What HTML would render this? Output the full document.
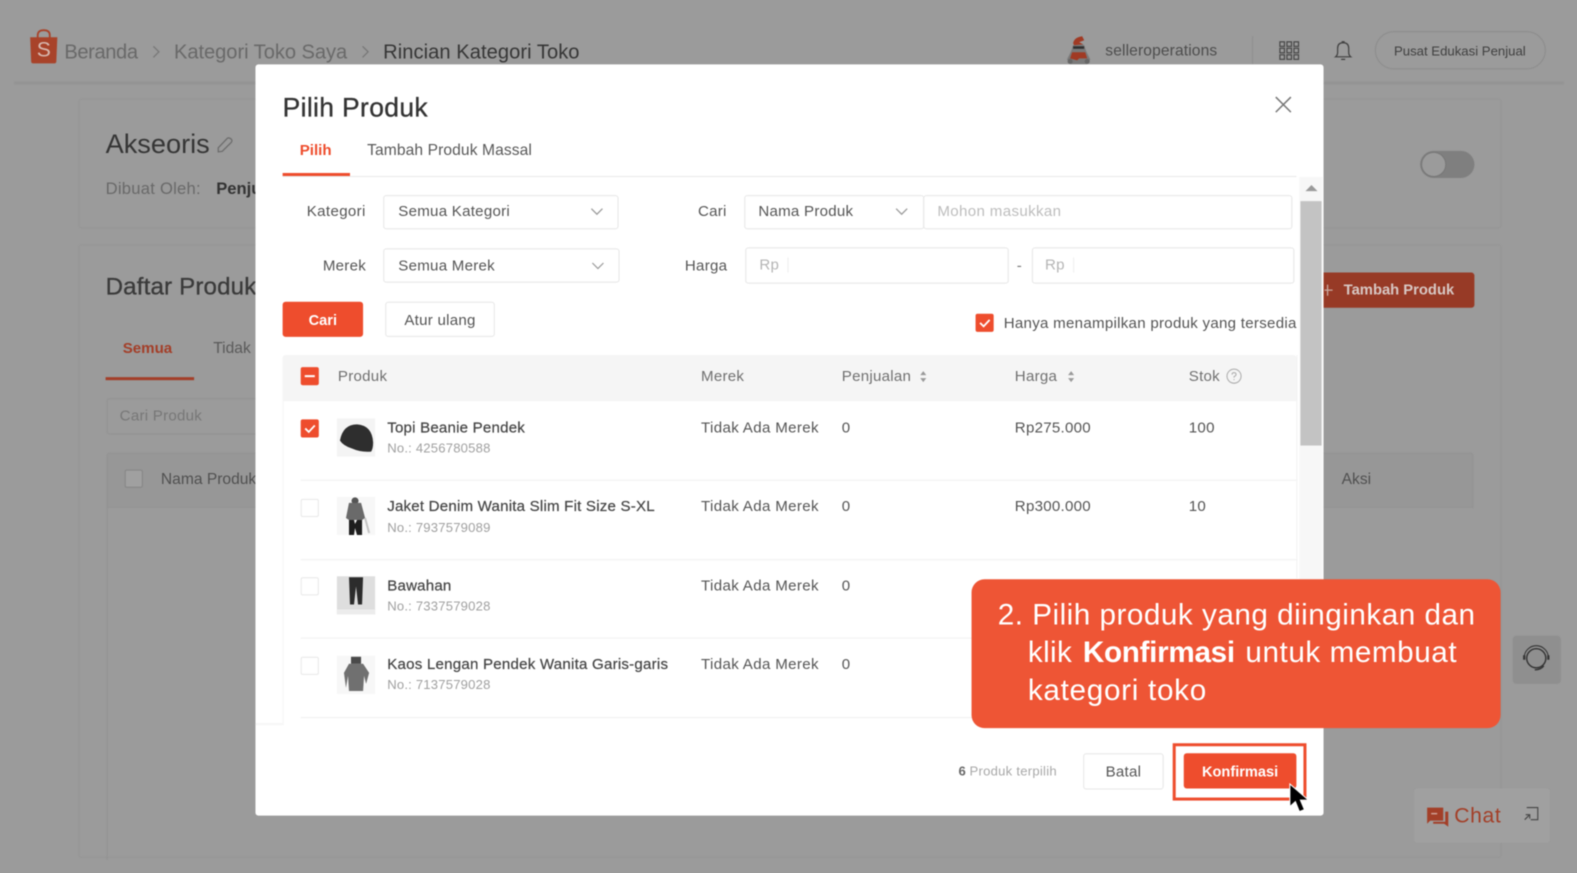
<!DOCTYPE html>
<html><head><meta charset="utf-8"><style>
html,body{margin:0;padding:0;width:1577px;height:873px;overflow:hidden;background:#9b9b9b}
#w{position:absolute;left:0;top:0;width:1568px;height:868px;transform:scale(1.00574);transform-origin:0 0;font-family:"Liberation Sans",sans-serif;overflow:hidden;filter:blur(.45px)}
.a{position:absolute;box-sizing:border-box}
.t{position:absolute;white-space:nowrap;line-height:20px;height:20px;font-size:15px;color:#555;letter-spacing:.25px;margin-top:1px}
.bx{position:absolute;box-sizing:border-box;border:1px solid #e6e6e6;border-radius:3px;background:#fff}
.cb{position:absolute;box-sizing:border-box;width:18px;height:18px;border-radius:2px;border:1px solid #e8e8e8;background:#fff}
.on{background:#ee4d2d;border-color:#ee4d2d}
.line{position:absolute;left:299px;width:990px;height:1px;background:#f0f0f0}
svg{position:absolute;overflow:visible}
.nm{font-size:15px;color:#444;-webkit-text-stroke:.2px #444;letter-spacing:.2px}
.no{font-size:13px;color:#a0a0a0;letter-spacing:.2px}
.c{font-size:29.500px;line-height:34px;height:34px;color:#fff}
</style></head><body><div id="w">

<!-- background page -->
<div class="a" style="left:14px;top:81px;width:1541px;height:3px;background:#949494"></div>
<div class="a" style="left:78px;top:98px;width:1415px;height:129px;border:1px solid #959595;border-radius:3px"></div>
<div class="a" style="left:78px;top:243px;width:1415px;height:610px;border:1px solid #959595;border-radius:3px"></div>

<svg style="left:29px;top:29px" width="29" height="35" viewBox="0 0 29 35"><path d="M1 8H28L27 32Q27 34 25 34H4Q2 34 2 32Z" fill="#a8432a"/><path d="M8.500 9V6Q8.500 1 14.500 1T20.500 6V9" fill="none" stroke="#a8432a" stroke-width="1.800"/></svg>
<div class="t" style="left:36px;top:37px;width:15px;text-align:center;font-size:21px;line-height:24px;height:24px;color:#d8b9b0;letter-spacing:0">S</div>
<div class="t" style="left:64px;top:41px;font-size:20px;color:#696969;letter-spacing:-.4px">Beranda</div>
<svg style="left:151px;top:45px" width="9" height="13"><path d="M1.500 1L7 6.500L1.500 12" fill="none" stroke="#767676" stroke-width="1.200"/></svg>
<div class="t" style="left:173px;top:41px;font-size:20px;color:#696969;letter-spacing:-.05px">Kategori Toko Saya</div>
<svg style="left:359px;top:45px" width="9" height="13"><path d="M1.500 1L7 6.500L1.500 12" fill="none" stroke="#767676" stroke-width="1.200"/></svg>
<div class="t" style="left:381px;top:41px;font-size:20px;color:#363636;letter-spacing:.05px">Rincian Kategori Toko</div>

<svg style="left:1058px;top:35px" width="29" height="30" viewBox="0 0 29 30"><path d="M9 10Q14 6 20 10L22 16L26 24L23 29H6L3 24L7 16Z" fill="#7a7a7a"/><path d="M9 8Q10 2 18 1L20 5L15 7L19 9L10 10Z" fill="#a03a24"/><rect x="9" y="11" width="11" height="2.500" fill="#2f2f2f"/><path d="M8 17H21L23 23H15L13 25L6 23Z" fill="#a03a24"/><circle cx="6" cy="26" r="2.500" fill="#666"/><circle cx="23" cy="26" r="2.500" fill="#666"/></svg>
<div class="t" style="left:1099px;top:40px;font-size:15.500px;color:#4d4d4d;letter-spacing:.12px">selleroperations</div>
<div class="a" style="left:1245px;top:36px;width:1px;height:29px;background:#8f8f8f"></div>
<svg style="left:1272px;top:41px" width="20" height="19" fill="none" stroke="#474747" stroke-width="1.200"><rect x=".6" y=".6" width="4.500" height="4.500"/><rect x="7.600" y=".6" width="4.500" height="4.500"/><rect x="14.600" y=".6" width="4.500" height="4.500"/><rect x=".6" y="7" width="4.500" height="4.500"/><rect x="7.600" y="7" width="4.500" height="4.500"/><rect x="14.600" y="7" width="4.500" height="4.500"/><rect x=".6" y="13.500" width="4.500" height="4.500"/><rect x="7.600" y="13.500" width="4.500" height="4.500"/><rect x="14.600" y="13.500" width="4.500" height="4.500"/></svg>
<svg style="left:1326px;top:40px" width="19" height="21" fill="none" stroke="#3f3f3f" stroke-width="1.200"><path d="M2 16.500Q4 15 4 12V8Q4 2.500 9.500 2.500T15 8V12Q15 15 17 16.500Z"/><path d="M8 1.500H11M7.500 19H11.500"/></svg>
<div class="a" style="left:1367px;top:31px;width:170px;height:38px;border:1px solid #8c8c8c;border-radius:19px"></div>
<div class="t" style="left:1386px;top:40px;font-size:13.100px;color:#404040;letter-spacing:0">Pusat Edukasi Penjual</div>

<div class="t" style="left:105px;top:130px;font-size:27px;line-height:24px;height:24px;color:#353535;letter-spacing:0">Akseoris</div>
<svg style="left:215px;top:135px" width="18" height="18" fill="none" stroke="#6a6a6a" stroke-width="1.200"><path d="M2 12L11 2.500Q12.500 1.500 14.500 3T15 6.500L6 15.500L2 16Z"/></svg>
<div class="t" style="left:105px;top:177px;font-size:16.500px;color:#696969">Dibuat Oleh:</div>
<div class="t" style="left:215px;top:177px;font-size:16.500px;font-weight:bold;color:#333;letter-spacing:0">Penjual</div>
<div class="a" style="left:1412px;top:150px;width:54px;height:27px;border-radius:14px;background:#7f7f7f"></div>
<div class="a" style="left:1413px;top:151px;width:25px;height:25px;border-radius:13px;background:#9b9b9b;border:1px solid #777"></div>

<div class="t" style="left:105px;top:273px;font-size:24px;line-height:24px;height:24px;color:#3a3a3a;-webkit-text-stroke:.3px #3a3a3a;letter-spacing:.15px">Daftar Produk</div>
<div class="t" style="left:122px;top:336px;font-weight:bold;color:#a33e28;font-size:15px;letter-spacing:0">Semua</div>
<div class="t" style="left:212px;top:336px;color:#5a5a5a;font-size:15.500px;letter-spacing:0">Tidak</div>
<div class="a" style="left:105px;top:375px;width:88px;height:3px;background:#a33e28"></div>
<div class="a" style="left:106px;top:396px;width:300px;height:36px;border:1px solid #929292;border-radius:3px"></div>
<div class="t" style="left:119px;top:403px;color:#777;font-size:15px">Cari Produk</div>
<div class="a" style="left:106px;top:450px;width:1359px;height:55px;border:1px solid #929292;background:#979797;border-radius:3px 3px 0 0"></div>
<div class="a" style="left:106px;top:505px;width:1px;height:350px;background:#929292"></div>
<div class="a" style="left:124px;top:467px;width:18px;height:18px;border:1px solid #858585;background:#a0a0a0;border-radius:2px"></div>
<div class="t" style="left:160px;top:466px;color:#505050;font-size:15.500px;letter-spacing:0">Nama Produk</div>
<div class="t" style="left:1334px;top:466px;color:#505050;font-size:15.500px;letter-spacing:0">Aksi</div>

<div class="a" style="left:1300px;top:271px;width:166px;height:35px;border-radius:3px;background:#973a26"></div>
<div class="t" style="left:1336px;top:278px;font-size:14.700px;font-weight:bold;color:#d8c8c4;letter-spacing:0">Tambah Produk</div>
<svg style="left:1316px;top:282px" width="10" height="13" stroke="#c9a9a0" stroke-width="1.300"><path d="M1 6.500H9M4 1V12"/></svg>

<div class="a" style="left:1504px;top:632px;width:48px;height:48px;border-radius:4px;background:#8f8f8f"></div>
<svg style="left:1512px;top:640px" width="30" height="30" fill="none" stroke="#333"><circle cx="15.500" cy="14.500" r="9.500" stroke-width="1.400"/><path d="M3.500 14A12 12 0 0 1 27.500 14" stroke-width="1"/><path d="M3.500 11.500V16M27.500 11.500V16" stroke-width="2.200"/><path d="M14 26Q20 26 23 22" stroke-width="1.400"/></svg>

<div class="a" style="left:1406px;top:784px;width:135px;height:54px;border-radius:3px;background:#a0a0a0"></div>
<svg style="left:1418px;top:802px" width="23" height="21"><path d="M1 1H17V14H4L1 17Z" fill="#a33f28"/><path d="M19 5H22V20L18 17H7V15H19Z" fill="#a33f28"/><path d="M5 7H11" stroke="#cfa095" stroke-width="1.500"/></svg>
<div class="t" style="left:1446px;top:800px;font-size:21px;line-height:22px;height:22px;color:#a33f28;letter-spacing:.6px">Chat</div>
<svg style="left:1515px;top:802px" width="15" height="15" fill="none" stroke="#444" stroke-width="1.100"><path d="M3 1H14V13H7M1 13L6 8M2 8H6V12"/></svg>

<!-- modal -->
<div class="a" style="left:254px;top:64px;width:1062px;height:747px;background:#fff;border-radius:3px"></div>
<div class="t" style="left:281px;top:94px;font-size:26.300px;line-height:25px;height:25px;color:#333;-webkit-text-stroke:.3px #333;letter-spacing:.35px">Pilih Produk</div>
<svg style="left:1267px;top:95px" width="18" height="18" fill="none" stroke="#777" stroke-width="1.500"><path d="M1.500 1.500L16.500 16.500M16.500 1.500L1.500 16.500"/></svg>
<div class="t" style="left:298px;top:139px;font-size:15px;font-weight:bold;color:#ee4d2d;letter-spacing:0">Pilih</div>
<div class="t" style="left:365px;top:139px;font-size:15.500px;color:#595959;letter-spacing:.1px">Tambah Produk Massal</div>
<div class="a" style="left:281px;top:175px;width:1008px;height:1px;background:#e8e8e8"></div>
<div class="a" style="left:281px;top:172px;width:67px;height:3px;background:#ee4d2d"></div>

<div class="a" style="left:1292px;top:176px;width:23px;height:544px;background:#f7f7f7"></div>
<div class="a" style="left:1293px;top:200px;width:21px;height:243px;background:#c3c3c3"></div>
<svg style="left:1298px;top:183px" width="12" height="8"><path d="M0 7L6 1L12 7Z" fill="#9a9a9a"/></svg>

<div class="t" style="left:305px;top:200px;letter-spacing:.35px">Kategori</div>
<div class="bx" style="left:381px;top:194px;width:234px;height:34px"></div>
<div class="t" style="left:396px;top:200px">Semua Kategori</div>
<svg style="left:587px;top:206px" width="13" height="9"><path d="M1 1.500L6.500 7L12 1.500" fill="none" stroke="#999" stroke-width="1.200"/></svg>
<div class="t" style="left:694px;top:200px">Cari</div>
<div class="bx" style="left:740px;top:194px;width:179px;height:34px"></div>
<div class="t" style="left:754px;top:200px">Nama Produk</div>
<svg style="left:890px;top:206px" width="13" height="9"><path d="M1 1.500L6.500 7L12 1.500" fill="none" stroke="#999" stroke-width="1.200"/></svg>
<div class="bx" style="left:918px;top:194px;width:367px;height:34px"></div>
<div class="t" style="left:932px;top:200px;color:#bdbdbd;letter-spacing:.35px">Mohon masukkan</div>

<div class="t" style="left:321px;top:254px">Merek</div>
<div class="bx" style="left:381px;top:247px;width:235px;height:34px"></div>
<div class="t" style="left:396px;top:254px">Semua Merek</div>
<svg style="left:588px;top:260px" width="13" height="9"><path d="M1 1.500L6.500 7L12 1.500" fill="none" stroke="#999" stroke-width="1.200"/></svg>
<div class="t" style="left:681px;top:254px">Harga</div>
<div class="bx" style="left:741px;top:246px;width:262px;height:36px"></div>
<div class="t" style="left:755px;top:253px;color:#b5b5b5">Rp</div>
<div class="a" style="left:783px;top:256px;width:1px;height:15px;background:#eee"></div>
<div class="t" style="left:1011px;top:254px;color:#777">-</div>
<div class="bx" style="left:1026px;top:246px;width:261px;height:36px"></div>
<div class="t" style="left:1039px;top:253px;color:#b5b5b5">Rp</div>
<div class="a" style="left:1067px;top:256px;width:1px;height:15px;background:#eee"></div>

<div class="a" style="left:281px;top:300px;width:80px;height:35px;border-radius:3px;background:#ee4d2d"></div>
<div class="t" style="left:281px;top:308px;width:80px;text-align:center;font-weight:bold;font-size:14.500px;color:#fff;letter-spacing:0">Cari</div>
<div class="bx" style="left:383px;top:300px;width:109px;height:35px"></div>
<div class="t" style="left:383px;top:308px;width:109px;text-align:center;color:#555">Atur ulang</div>
<div class="cb on" style="left:970px;top:312px"></div>
<svg style="left:973px;top:316px" width="13" height="11"><path d="M1.500 5L5 8.500L11 2" fill="none" stroke="#fff" stroke-width="1.800"/></svg>
<div class="t" style="left:998px;top:311px;letter-spacing:.27px">Hanya menampilkan produk yang tersedia</div>

<div class="a" style="left:281px;top:353px;width:1008px;height:46px;background:#f5f5f5;border-radius:3px 3px 0 0"></div>
<div class="a" style="left:281px;top:399px;width:1px;height:321px;background:#f5f5f5"></div>
<div class="a" style="left:1289px;top:353px;width:1px;height:222px;background:#f2f2f2"></div>
<div class="cb on" style="left:299px;top:365px"></div>
<div class="a" style="left:303px;top:373px;width:10px;height:2px;background:#fff"></div>
<div class="t" style="left:336px;top:364px;color:#707070">Produk</div>
<div class="t" style="left:697px;top:364px;color:#707070">Merek</div>
<div class="t" style="left:837px;top:364px;color:#707070">Penjualan</div>
<svg style="left:914px;top:368px" width="8" height="13" fill="#999"><path d="M4 1L7 5H1ZM4 12L1 8H7Z"/></svg>
<div class="t" style="left:1009px;top:364px;color:#707070">Harga</div>
<svg style="left:1061px;top:368px" width="8" height="13" fill="#999"><path d="M4 1L7 5H1ZM4 12L1 8H7Z"/></svg>
<div class="t" style="left:1182px;top:364px;color:#707070">Stok</div>
<svg style="left:1219px;top:366px" width="16" height="16" fill="none" stroke="#aaa"><circle cx="8" cy="8" r="7"/><path d="M6 6.500Q6 4.500 8 4.500T10 6.500Q10 7.500 8 8.500V9.500M8 11V12"/></svg>

<!-- row 1 -->
<div class="cb on" style="left:299px;top:417px"></div>
<svg style="left:302px;top:421px" width="13" height="11"><path d="M1.500 5L5 8.500L11 2" fill="none" stroke="#fff" stroke-width="1.800"/></svg>
<svg style="left:335px;top:416px" width="38" height="38"><rect width="38" height="38" fill="#f4f4f4"/><path d="M3 22Q6 6 20 6Q35 7 36 24Q36 30 34 33Q24 34 15 30Q6 27 3 22Z" fill="#2e2e2e"/></svg>
<div class="t nm" style="left:385px;top:415px">Topi Beanie Pendek</div>
<div class="t no" style="left:385px;top:435px">No.: 4256780588</div>
<div class="t" style="left:697px;top:415px;letter-spacing:.35px">Tidak Ada Merek</div>
<div class="t" style="left:837px;top:415px">0</div>
<div class="t" style="left:1009px;top:415px">Rp275.000</div>
<div class="t" style="left:1182px;top:415px">100</div>
<div class="line" style="top:477px"></div>

<!-- row 2 -->
<div class="cb" style="left:299px;top:496px"></div>
<svg style="left:335px;top:494px" width="38" height="38"><rect width="38" height="38" fill="#f7f7f7"/><circle cx="18" cy="4" r="3.500" fill="#555"/><path d="M12 6H24L28 21L25 23H12L9 21Z" fill="#6a6a6a"/><path d="M12 23H17L18 27L20 23H25L25 38H20L18 31L17 38H12Z" fill="#1e1e1e"/><path d="M28 21L32 36" stroke="#c4c4c4" stroke-width="2"/></svg>
<div class="t nm" style="left:385px;top:493px">Jaket Denim Wanita Slim Fit Size S-XL</div>
<div class="t no" style="left:385px;top:514px">No.: 7937579089</div>
<div class="t" style="left:697px;top:493px;letter-spacing:.35px">Tidak Ada Merek</div>
<div class="t" style="left:837px;top:493px">0</div>
<div class="t" style="left:1009px;top:493px">Rp300.000</div>
<div class="t" style="left:1182px;top:493px">10</div>
<div class="line" style="top:556px"></div>

<!-- row 3 -->
<div class="cb" style="left:299px;top:574px"></div>
<svg style="left:335px;top:573px" width="38" height="38"><rect width="38" height="38" fill="#dedede"/><path d="M12 1H26L25 28H21L19 10L17 28H13Z" fill="#2c2c2c"/><rect x="0" y="33" width="38" height="5" fill="#ececec"/></svg>
<div class="t nm" style="left:385px;top:572px">Bawahan</div>
<div class="t no" style="left:385px;top:592px">No.: 7337579028</div>
<div class="t" style="left:697px;top:572px;letter-spacing:.35px">Tidak Ada Merek</div>
<div class="t" style="left:837px;top:572px">0</div>
<div class="line" style="top:634px"></div>

<!-- row 4 -->
<div class="cb" style="left:299px;top:653px"></div>
<svg style="left:335px;top:652px" width="38" height="38"><rect width="38" height="38" fill="#f7f7f7"/><path d="M12 8H26L32 17L29 28L27 20L26 35H12L11 20L9 32L7 17Z" fill="#707070"/><rect x="14" y="1" width="10" height="7" fill="#4a4a4a"/></svg>
<div class="t nm" style="left:385px;top:650px;letter-spacing:.22px">Kaos Lengan Pendek Wanita Garis-garis</div>
<div class="t no" style="left:385px;top:670px">No.: 7137579028</div>
<div class="t" style="left:697px;top:650px;letter-spacing:.35px">Tidak Ada Merek</div>
<div class="t" style="left:837px;top:650px">0</div>
<div class="line" style="top:713px"></div>
<div class="a" style="left:254px;top:719px;width:28px;height:2px;background:#f6f6f6"></div>

<!-- footer -->
<div class="t" style="left:953px;top:756px;font-size:13px;font-weight:bold;color:#666;letter-spacing:0">6</div>
<div class="t" style="left:964px;top:756px;font-size:13px;color:#a8a8a8">Produk terpilih</div>
<div class="bx" style="left:1077px;top:749px;width:80px;height:36px"></div>
<div class="t" style="left:1077px;top:757px;width:80px;text-align:center;color:#555">Batal</div>
<div class="a" style="left:1166px;top:739px;width:133px;height:57px;border:3px solid #ee4d2d"></div>
<div class="a" style="left:1177px;top:749px;width:112px;height:35px;border-radius:3px;background:#ee4d2d"></div>
<div class="t" style="left:1177px;top:757px;width:112px;text-align:center;font-size:14.500px;font-weight:bold;color:#fff;letter-spacing:0">Konfirmasi</div>
<svg style="left:1281px;top:778px" width="23" height="32"><path d="M1.500 1.500V24L7 19L11 29L16 27L12 17.500H20Z" fill="#000" stroke="#fff" stroke-width="1"/></svg>

<!-- callout -->
<div class="a" style="left:966px;top:576px;width:526px;height:148px;border-radius:13px;background:#ee5535"></div>
<div class="t c" style="left:992px;top:594px;letter-spacing:.5px">2. Pilih produk yang diinginkan dan</div>
<div class="t c" style="left:1022px;top:631px;letter-spacing:.37px">klik <b style="margin-left:2px;letter-spacing:-.3px">Konfirmasi</b> <span style="margin-left:2px;letter-spacing:.55px">untuk membuat</span></div>
<div class="t c" style="left:1022px;top:669px;letter-spacing:.7px">kategori toko</div>

</div></body></html>
